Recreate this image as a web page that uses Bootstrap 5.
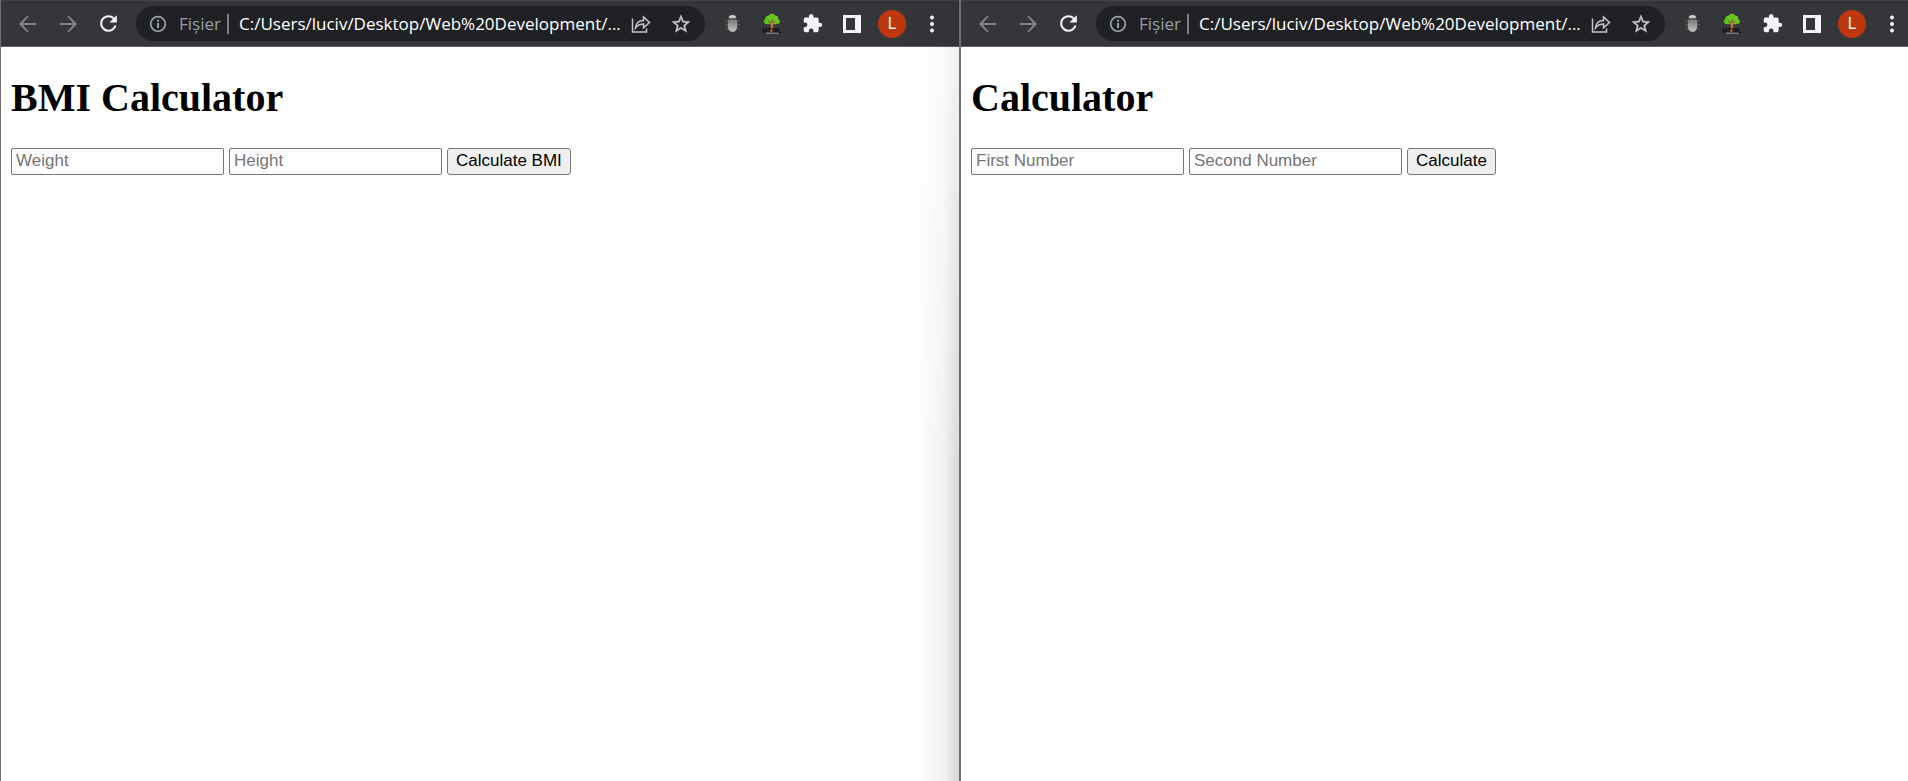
<!DOCTYPE html>
<html lang="ro">
<head>
<meta charset="utf-8">
<meta name="viewport" content="width=device-width, initial-scale=1">
<title>Calculators</title>
<link href="https://cdn.jsdelivr.net/npm/bootstrap@5.3.0/dist/css/bootstrap.min.css" rel="stylesheet">
<style>
  .win { border-left: 1px solid #6f6f6f; flex: 958 1 0; min-width: 0; position: relative; }
  .win-front { border-left: 2px solid #6f6f6f; flex-grow: 947; }
  .toolbar { height: 47px; background: #35363a; border-top: 1px solid #414246; border-bottom: 1px solid #5e5f62; padding: 0 15px 0 7px; }
  .win-front .toolbar { padding-right: 4px; }
  .tool { width: 40px; height: 40px; padding: 0; border: 0; background: none; color: #f1f3f4; display: flex; align-items: center; justify-content: center; flex: none; }
  .tool.dim { color: #85868a; }
  .tool.menu-btn { width: 24px; margin-left: 8px; }
  .tool svg, .omnibox svg { display: block; flex: none; }
  .omnibox { height: 35px; border-radius: 18px; background: #202124; color: #9aa0a6; margin: 0 7px 0 8px; padding: 0 4px 0 13px; min-width: 0; font: 17px/24px "Open Sans", "Noto Sans", sans-serif; }
  .omnibox .tool { color: #c4c7ca; height: 35px; }
  .omnibox .share-btn { width: 32px; margin-right: 4px; }
  .origin { width: 50px; margin-left: 12px; border-right: 2px solid #7d8084; line-height: 20px; }
  .address { color: #fff; background: none; border: 0; padding: 0; margin-left: 10px; flex: 1 1 0; min-width: 0; outline: 0; }
  .avatar { width: 28px; height: 28px; border-radius: 50%; background: #bf360c; color: #fff; font: 16px/28px Roboto, sans-serif; }
  .page { padding: 28px 10px; background: #fff; }
  .page h1 { font: bold 40px/46px "Liberation Serif", serif; color: #000; margin: 0 0 27px; }
  .page form { gap: 5px; }
  .field, .go { height: 27px; font: 17px/20px "Liberation Sans", sans-serif; border: 1px solid #767676; border-radius: 2px; color: #000; }
  .field { width: 213px; padding: 0 4px 2px; min-width: 0; }
  .field::placeholder { color: #757575; opacity: 1; }
  .go { background: #efefef; padding: 0 8px 2px; border-radius: 3px; white-space: nowrap; }
  .shade { position: absolute; top: 0; right: 0; bottom: 0; width: 60px; pointer-events: none; background: linear-gradient(to right, transparent, rgba(0,0,0,.01) 35%, rgba(0,0,0,.05) 75%, rgba(0,0,0,.16)); -webkit-mask-image: linear-gradient(rgba(0,0,0,.3), #000 60%); }
</style>
</head>
<body class="bg-white">
<svg class="d-none" aria-hidden="true">
  <symbol id="back" viewBox="0 0 24 24"><path d="M21 12H4M12 3.500 3.700 12l8.300 8.500" fill="none" stroke="currentColor" stroke-width="2"/></symbol>
  <symbol id="fwd" viewBox="0 0 24 24"><path d="M3 12h17M12 3.500l8.300 8.500-8.300 8.500" fill="none" stroke="currentColor" stroke-width="2"/></symbol>
  <symbol id="reload" viewBox="0 0 24 24"><path fill="currentColor" d="M17.650 6.350A7.960 7.960 0 0 0 12 4a8 8 0 1 0 7.730 10h-2.080A6 6 0 1 1 12 6c1.660 0 3.140.69 4.220 1.780L13 11h7V4z"/></symbol>
  <symbol id="info" viewBox="0 0 18 18"><circle cx="9" cy="9" r="7.300" fill="none" stroke="currentColor" stroke-width="1.700"/><path fill="currentColor" d="M8 4.800h2v2H8zM8 8h2v5H8z"/></symbol>
  <symbol id="share" viewBox="0 0 20 20"><path d="M1.500 4.500V18h14v-3.500M4.500 14c.5-5 3.500-7.500 8-7.500V3L18.500 8.500l-6 5.300V10c-3.500 0-6 1.200-8 4z" fill="none" stroke="currentColor" stroke-width="1.500"/></symbol>
  <symbol id="star" viewBox="0 0 24 24"><path fill="currentColor" stroke="currentColor" stroke-width=".4" d="M22 9.240l-7.190-.62L12 2 9.190 8.630 2 9.240l5.460 4.730L5.820 21 12 17.270 18.180 21l-1.630-7.030zM12 15.400l-3.760 2.270 1-4.280-3.320-2.880 4.380-.38L12 6.100l1.710 4.040 4.380.38-3.320 2.880 1 4.280z"/></symbol>
  <symbol id="bug" viewBox="0 0 18 20"><path d="M1 6l3 1.500M17 6l-3 1.500M1 11h3m10 0h3M1 17l3-2m13 2-3-2" stroke="#5b5c60"/><path fill="#c9c9c9" d="M5 4.500C5 2 6.500 1 9 1s4 1 4 3.500z"/><path fill="url(#bugfill)" d="M4 6.500c2-1.300 8-1.300 10 0V13c0 3.500-2 6-5 6s-5-2.500-5-6z"/></symbol>
  <symbol id="tree" viewBox="0 0 20 21"><path d="M8.500 19l.5-7-4-3 .5-.7L9 10V5h1.500v5L14 8l.5.700-3.500 3.300.7 7z" fill="#c77b22"/><path fill="#65c51c" d="M5 11C1.500 11 .8 7.300 3.300 6.200 3 3.800 4.700 2.500 6.500 2.800 7.500.2 12 .1 13 2.500c2.300-.2 3.800 1.500 3.300 3.500C19 7.500 18.500 11 15 11c-1.500.8-3 .3-3.600-.8l2.100-2-.4-.5-2.200 1.700V6H9.400v3.500L6.200 7.800l-.3.500L8.300 10c-.5 1-2 1.500-3.300 1z"/><path fill="#bbb" d="M4 19.500h13v1H4z"/><text x="10" y="19.500" text-anchor="middle" font-family="Liberation Sans, sans-serif" font-weight="bold" font-size="7" fill="#100c0b">HTML</text></symbol>
  <symbol id="ext" viewBox="0 0 24 24"><path fill="currentColor" d="M20.500 11H19V7a2 2 0 0 0-2-2h-4V3.500a2.500 2.500 0 0 0-5 0V5H4a2 2 0 0 0-2 2v3.800h1.500a2.700 2.700 0 0 1 0 5.400H2V20a2 2 0 0 0 2 2h3.800v-1.500a2.700 2.700 0 0 1 5.400 0V22H17a2 2 0 0 0 2-2v-4h1.500a2.500 2.500 0 0 0 0-5z"/></symbol>
  <symbol id="panel" viewBox="0 0 18 18"><path fill="currentColor" fill-rule="evenodd" d="M0 0h18v18H0zM3 3v12h9V3z"/></symbol>
  <symbol id="dots" viewBox="0 0 4 18"><g fill="currentColor"><circle cx="2" cy="2.500" r="2"/><circle cx="2" cy="9" r="2"/><circle cx="2" cy="15.500" r="2"/></g></symbol>
</svg>
<svg width="0" height="0" class="position-absolute" aria-hidden="true"><defs><linearGradient id="bugfill" x2="0" y2="1"><stop stop-color="#777"/><stop offset="1" stop-color="#c2c2c2"/></linearGradient></defs></svg>

<div class="d-flex min-vh-100 overflow-hidden">
  <section class="win">
    <div class="toolbar d-flex align-items-center">
      <button class="tool dim" aria-label="Back"><svg width="22" height="22"><use href="#back"/></svg></button>
      <button class="tool dim" aria-label="Forward"><svg width="22" height="22"><use href="#fwd"/></svg></button>
      <button class="tool" aria-label="Reload"><svg width="25" height="25"><use href="#reload"/></svg></button>
      <div class="omnibox d-flex align-items-center flex-grow-1">
        <svg width="18" height="18"><use href="#info"/></svg>
        <span class="origin">Fișier</span>
        <input class="address" type="text" aria-label="Address" value="C:/Users/luciv/Desktop/Web%20Development/...">
        <button class="tool share-btn" aria-label="Share"><svg width="20" height="20"><use href="#share"/></svg></button>
        <button class="tool" aria-label="Bookmark"><svg width="22" height="22"><use href="#star"/></svg></button>
      </div>
      <button class="tool" aria-label="Debugger"><svg width="17" height="19"><use href="#bug"/></svg></button>
      <button class="tool" aria-label="HTML tree"><svg width="20" height="21"><use href="#tree"/></svg></button>
      <button class="tool" aria-label="Extensions"><svg width="21" height="21"><use href="#ext"/></svg></button>
      <button class="tool" aria-label="Side panel"><svg width="18" height="18"><use href="#panel"/></svg></button>
      <button class="tool" aria-label="Profile"><span class="avatar">L</span></button>
      <button class="tool menu-btn" aria-label="Menu"><svg width="4" height="18"><use href="#dots"/></svg></button>
    </div>
    <main class="page">
      <h1>BMI Calculator</h1>
      <form class="d-flex">
        <input class="field" type="text" placeholder="Weight" aria-label="Weight">
        <input class="field" type="text" placeholder="Height" aria-label="Height">
        <button class="go" type="button">Calculate BMI</button>
      </form>
    </main>
    <div class="shade"></div>
  </section>
  <section class="win win-front">
    <div class="toolbar d-flex align-items-center">
      <button class="tool dim" aria-label="Back"><svg width="22" height="22"><use href="#back"/></svg></button>
      <button class="tool dim" aria-label="Forward"><svg width="22" height="22"><use href="#fwd"/></svg></button>
      <button class="tool" aria-label="Reload"><svg width="25" height="25"><use href="#reload"/></svg></button>
      <div class="omnibox d-flex align-items-center flex-grow-1">
        <svg width="18" height="18"><use href="#info"/></svg>
        <span class="origin">Fișier</span>
        <input class="address" type="text" aria-label="Address" value="C:/Users/luciv/Desktop/Web%20Development/...">
        <button class="tool share-btn" aria-label="Share"><svg width="20" height="20"><use href="#share"/></svg></button>
        <button class="tool" aria-label="Bookmark"><svg width="22" height="22"><use href="#star"/></svg></button>
      </div>
      <button class="tool" aria-label="Debugger"><svg width="17" height="19"><use href="#bug"/></svg></button>
      <button class="tool" aria-label="HTML tree"><svg width="20" height="21"><use href="#tree"/></svg></button>
      <button class="tool" aria-label="Extensions"><svg width="21" height="21"><use href="#ext"/></svg></button>
      <button class="tool" aria-label="Side panel"><svg width="18" height="18"><use href="#panel"/></svg></button>
      <button class="tool" aria-label="Profile"><span class="avatar">L</span></button>
      <button class="tool menu-btn" aria-label="Menu"><svg width="4" height="18"><use href="#dots"/></svg></button>
    </div>
    <main class="page">
      <h1>Calculator</h1>
      <form class="d-flex">
        <input class="field" type="text" placeholder="First Number" aria-label="First Number">
        <input class="field" type="text" placeholder="Second Number" aria-label="Second Number">
        <button class="go" type="button">Calculate</button>
      </form>
    </main>
  </section>
</div>
<script src="https://cdn.jsdelivr.net/npm/bootstrap@5.3.0/dist/js/bootstrap.bundle.min.js"></script>
</body>
</html>
